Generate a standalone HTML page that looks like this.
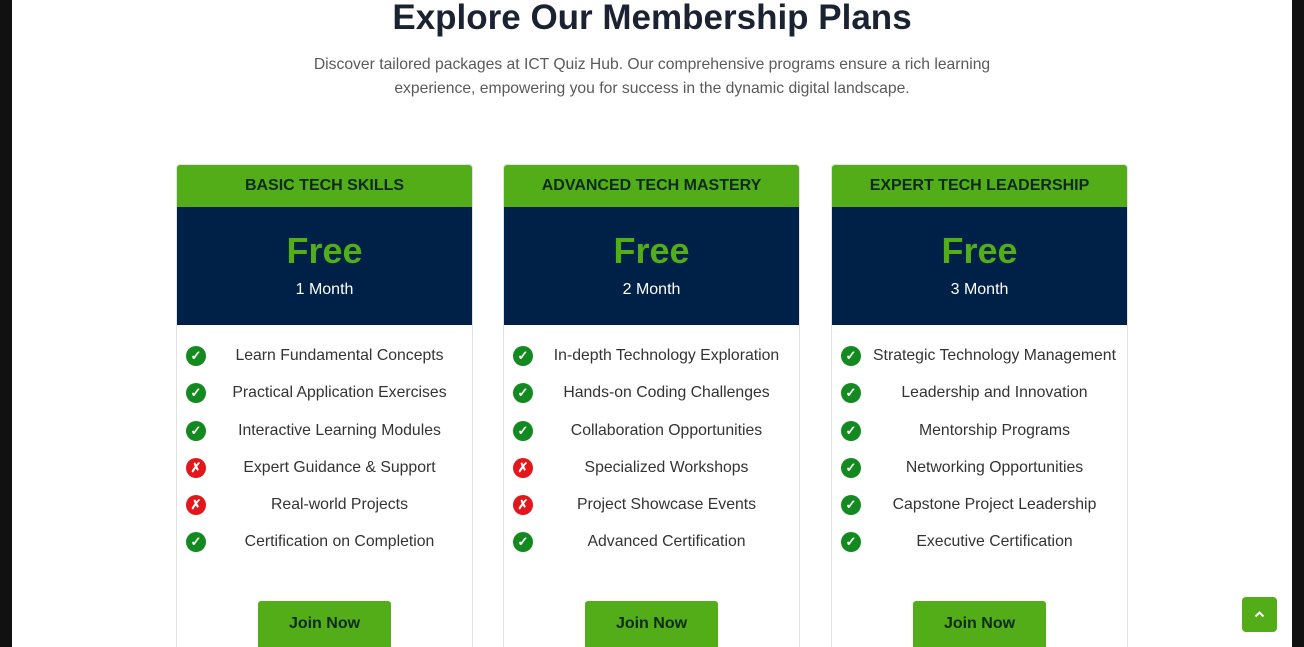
<!DOCTYPE html>
<html style="overflow:hidden;height:647px"><head><meta charset="utf-8"><style>
*{box-sizing:border-box;margin:0;padding:0}
body{width:1304px;height:647px;overflow:hidden;background:#111;font-family:"Liberation Sans",Arial,sans-serif;position:relative}
.page{position:absolute;left:12px;top:0;width:1280px;height:647px;background:#fff}
h1{position:absolute;left:0;width:1304px;top:-2px;text-align:center;font-size:35px;font-weight:bold;color:#1b2332}
.sub{position:absolute;left:0;width:1304px;top:53px;text-align:center;font-size:15.7px;line-height:24px;color:#5a5a5a}
.card{position:absolute;top:164px;width:297px;height:483px;border:1px solid #e3e3e3;border-bottom:none;border-radius:4px 4px 0 0;background:#fff;overflow:hidden}
.hd{height:42px;background:#52ad18;color:#0e2a1a;font-weight:bold;font-size:16px;text-align:center;line-height:42px}
.pr{height:118px;background:#002147;text-align:center}
.pr .f{color:#52ad18;font-size:36px;font-weight:bold;padding-top:24px;line-height:40px}
.pr .m{color:#fff;font-size:16px;margin-top:10px}
ul{list-style:none;padding-top:21px}
li{height:37.3px;position:relative;font-size:15.8px;color:#333;text-align:center;padding-left:30px;line-height:20px}
.ic{position:absolute;left:9px;top:0;width:20px;height:20px;border-radius:50%;color:#fff;font-size:13px;font-weight:bold;line-height:20px;text-align:center}
.ok{background:#138a1f}.no{background:#e3171b}
.btn{position:absolute;left:81px;top:436px;width:133px;height:50px;background:#52ad18;border-radius:3px;color:#0e2a1a;font-weight:bold;font-size:16px;text-align:center;line-height:46px}
.top{position:absolute;left:1242px;top:597px;width:35px;height:35px;background:#52ad18;border-radius:4px}
</style></head><body>
<div class="page"></div>
<h1>Explore Our Membership Plans</h1>
<div class="sub">Discover tailored packages at ICT Quiz Hub. Our comprehensive programs ensure a rich learning<br>experience, empowering you for success in the dynamic digital landscape.</div>

<div class="card" style="left:176px"><div class="hd">BASIC TECH SKILLS</div><div class="pr"><div class="f">Free</div><div class="m">1 Month</div></div>
<ul>
<li><span class="ic ok">✓</span>Learn Fundamental Concepts</li>
<li><span class="ic ok">✓</span>Practical Application Exercises</li>
<li><span class="ic ok">✓</span>Interactive Learning Modules</li>
<li><span class="ic no">✗</span>Expert Guidance &amp; Support</li>
<li><span class="ic no">✗</span>Real-world Projects</li>
<li><span class="ic ok">✓</span>Certification on Completion</li>
</ul><div class="btn">Join Now</div></div>

<div class="card" style="left:503px"><div class="hd">ADVANCED TECH MASTERY</div><div class="pr"><div class="f">Free</div><div class="m">2 Month</div></div>
<ul>
<li><span class="ic ok">✓</span>In-depth Technology Exploration</li>
<li><span class="ic ok">✓</span>Hands-on Coding Challenges</li>
<li><span class="ic ok">✓</span>Collaboration Opportunities</li>
<li><span class="ic no">✗</span>Specialized Workshops</li>
<li><span class="ic no">✗</span>Project Showcase Events</li>
<li><span class="ic ok">✓</span>Advanced Certification</li>
</ul><div class="btn">Join Now</div></div>

<div class="card" style="left:831px"><div class="hd">EXPERT TECH LEADERSHIP</div><div class="pr"><div class="f">Free</div><div class="m">3 Month</div></div>
<ul>
<li><span class="ic ok">✓</span>Strategic Technology Management</li>
<li><span class="ic ok">✓</span>Leadership and Innovation</li>
<li><span class="ic ok">✓</span>Mentorship Programs</li>
<li><span class="ic ok">✓</span>Networking Opportunities</li>
<li><span class="ic ok">✓</span>Capstone Project Leadership</li>
<li><span class="ic ok">✓</span>Executive Certification</li>
</ul><div class="btn">Join Now</div></div>

<div class="top"><svg width="35" height="35" viewBox="0 0 35 35"><path d="M13.5 19.5 L17.5 15.5 L21.5 19.5" stroke="#fff" stroke-width="2" fill="none"/></svg></div>
</body></html>
